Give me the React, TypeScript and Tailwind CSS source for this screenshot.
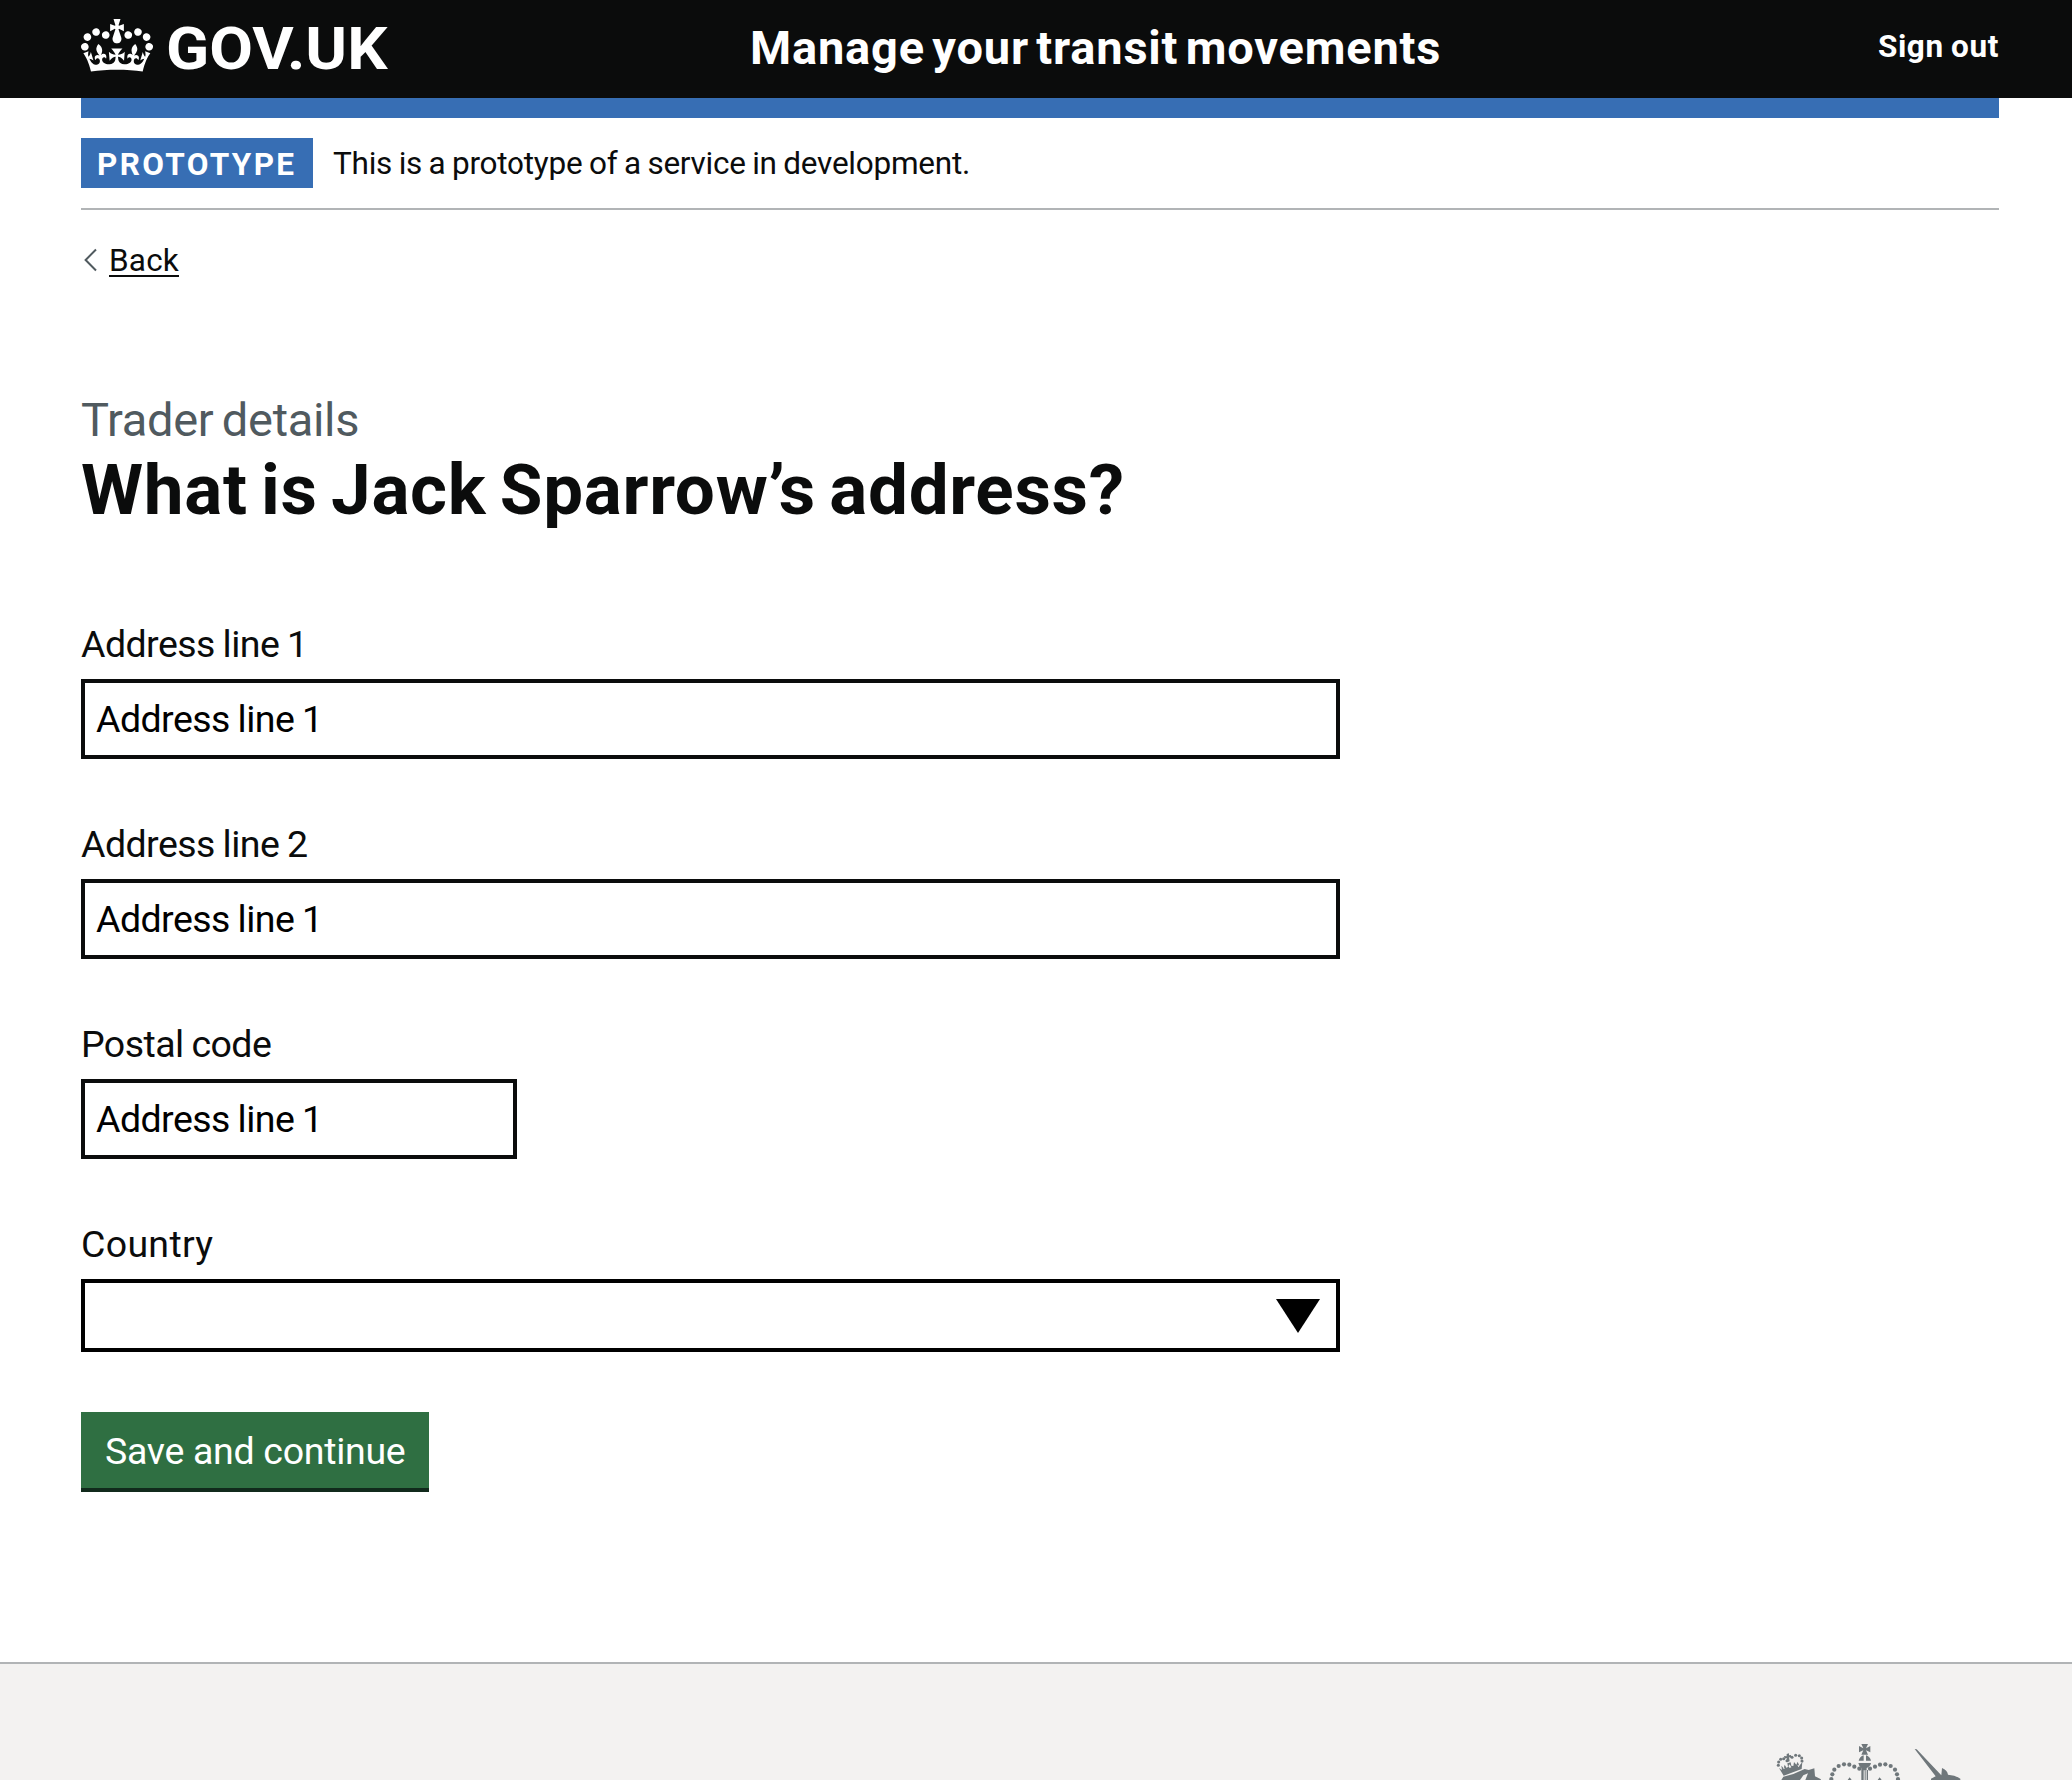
import type { ReactNode } from "react";

function Crown() {
  return (
    <svg className="h-[53px] w-[72px] shrink-0" viewBox="0 0 132 97" fill="#fff" aria-hidden="true">
      <path d="M25 30.2c3.5 1.5 7.7-.2 9.1-3.7 1.5-3.6-.2-7.8-3.9-9.2-3.6-1.4-7.6.3-9.1 3.9-1.4 3.5.3 7.5 3.9 9zM9 39.5c3.6 1.5 7.8-.2 9.2-3.7 1.5-3.6-.2-7.8-3.9-9.1-3.6-1.5-7.6.2-9.1 3.8-1.4 3.5.3 7.5 3.8 9zM4.4 57.2c3.5 1.5 7.7-.2 9.1-3.8 1.5-3.6-.2-7.7-3.9-9.1-3.5-1.5-7.6.3-9.1 3.8-1.4 3.5.3 7.6 3.9 9.1zm38.3-21.4c3.5 1.5 7.7-.2 9.1-3.8 1.5-3.6-.2-7.7-3.9-9.1-3.6-1.5-7.6.3-9.1 3.8-1.3 3.6.4 7.7 3.9 9.1zm64.4-5.6c-3.6 1.5-7.8-.2-9.1-3.7-1.5-3.6.2-7.8 3.8-9.2 3.6-1.4 7.7.3 9.2 3.9 1.3 3.5-.4 7.5-3.9 9zm15.9 9.3c-3.6 1.5-7.7-.2-9.1-3.7-1.5-3.6.2-7.8 3.7-9.1 3.6-1.5 7.7.2 9.2 3.8 1.5 3.5-.3 7.5-3.8 9zm4.7 17.7c-3.6 1.5-7.8-.2-9.2-3.8-1.5-3.6.2-7.7 3.9-9.1 3.6-1.5 7.7.3 9.2 3.8 1.3 3.5-.4 7.6-3.9 9.1zM89.3 35.8c-3.6 1.5-7.8-.2-9.2-3.8-1.4-3.6.2-7.7 3.9-9.1 3.6-1.5 7.7.3 9.2 3.8 1.4 3.6-.3 7.7-3.9 9.1zM69.7 17.7l8.9 4.7V9.3l-8.9 2.8c-.2-.3-.5-.6-.9-.9L72.4 0H59.6l3.5 11.2c-.3.3-.6.5-.9.9l-8.8-2.8v13.1l8.8-4.7c.3.3.6.7.9.9l-5 15.4v.1c-.2.8-.4 1.6-.4 2.4 0 4.1 3.1 7.5 7 8.1h.2c.3 0 .7.1 1 .1.4 0 .7 0 1-.1h.2c4-.6 7.1-4.1 7.1-8.1 0-.8-.1-1.7-.4-2.4V34l-5.1-15.4c.4-.2.7-.6 1-.9zM66 92.8c16.9 0 32.8 1.1 47.1 3.2 4-16.9 8.9-26.7 14-33.5l-9.6-3.4c1 4.9 1.1 7.2 0 10.2-1.5-1.4-3-4.3-4.2-8.7L108.6 76c2.8-2 5-3.2 7.5-3.3-4.4 9.4-10 11.9-13.6 11.2-4.3-.8-6.3-4.6-5.6-7.9 1-4.7 5.7-5.9 8-.5 4.3-8.7-3-11.4-7.6-8.8 7.1-7.2 7.9-13.5 2.1-21.1-8 6.1-8.1 12.3-4.5 20.8-4.7-5.4-12.1-2.5-9.5 6.2 3.4-5.2 7.9-2 7.2 3.1-.6 4.3-6.4 7.8-13.5 7.2-10.3-.9-10.9-8-11.2-13.8 2.5-.5 7.1 1.8 11 7.3L80.2 60c-4.1 4.4-8 5.3-12.3 5.4 1.4-4.4 8-11.6 8-11.6H55.5s6.4 7.2 7.9 11.6c-4.2-.1-8-1-12.3-5.4l1.4 16.4c3.9-5.5 8.5-7.7 10.9-7.3-.3 5.8-.9 12.8-11.1 13.8-7.2.6-12.9-2.9-13.5-7.2-.7-5 3.8-8.3 7.1-3.1 2.7-8.7-4.6-11.6-9.4-6.2 3.7-8.5 3.6-14.7-4.6-20.8-5.8 7.6-5 13.9 2.2 21.1-4.7-2.6-11.9.1-7.7 8.8 2.3-5.5 7.1-4.2 8.1.5.7 3.3-1.3 7.1-5.7 7.9-3.5.7-9-1.8-13.5-11.2 2.5.1 4.7 1.3 7.5 3.3l-4.7-15.4c-1.2 4.4-2.7 7.2-4.3 8.7-1.1-3-.9-5.3 0-10.2l-9.5 3.4c5 6.9 9.9 16.7 14 33.5 14.8-2.1 30.8-3.2 47.7-3.2z" />
    </svg>
  );
}

const archPearls = [
  [364, 362], [349, 356], [334, 350], [318, 349], [302, 354], [289, 365], [283, 379], [280, 393],
];
const lionPearls = [
  [121, 352], [122, 342], [128, 334], [137, 332], [147, 338], [162, 328], [173, 322], [184, 323], [191, 330], [192, 339],
];

function Crest() {
  return (
    <svg className="h-[42px] w-[261px] shrink-0" viewBox="0 270 783 126" fill="#6f777b" aria-hidden="true">
      {lionPearls.map(([x, y]) => <circle key={x} cx={x} cy={y} r="4.6" />)}
      <path d="M146 318l7-2 0 6 6-1 1 8-7-1 2 12-8 2-1-12-6 2-2-8 8 1z" />
      <path d="M123 360l9 6-2-13 7 7 3-10 6 10 4-4-2-10 10-3 2 10 6 1 2-12 7 8 4-9 5 12 9-11-2 21-54 20z" />
      <path d="M133 355l4 8 4-2zm18 0l4 5 5-2-5-9zm27-3l4 6 3-6z" fill="#f3f2f1" />
      <path d="M130 396l6-10 30-8 34-15 12 3 17-5 2 24 18 9-2 4z" />
      <path d="M186 396l10-14 14-6-8 20z" fill="#f3f2f1" />
      <path d="M370 288h20l-6 13 13-7v19l-13-6 6 13h-20l6-13-13 6v-19l13 7z" />
      <path d="M377 322v16h-15q3-12 15-16zM384 322v16h15q-3-12-15-16zM361 345h38q-2 11-13 15v36h-6v-29h-3v29h-7v-36q-7-4-9-15zM383 366v30h7v-30z" />
      {archPearls.map(([x, y]) => (
        <g key={x}>
          <circle cx={x} cy={y} r="6.3" />
          <circle cx={760 - x} cy={y} r="6.3" />
        </g>
      ))}
      <path d="M329 396l6-8 6 8zM419 396l6-8 6 8z" />
      <path d="M530 303l6 1 74 78 2-22q16 6 18 20 22 1 37 12v4h-88v-4l14-7z" />
    </svg>
  );
}

function Field({ label, spacing = "tracking-[-0.55px]", children }: { label: string; spacing?: string; children: ReactNode }) {
  return (
    <div className="flex flex-col gap-2.5">
      <label className={`h-[50px] text-[37.5px] leading-[50px] [word-spacing:-1px] ${spacing}`}>{label}</label>
      {children}
    </div>
  );
}

function TextBox({ width, value }: { width: string; value: string }) {
  return (
    <div className={`h-20 border-4 border-[#0b0c0c] pl-[11px] text-[37.5px] leading-[72px] tracking-[-0.55px] text-black [word-spacing:-1px] ${width}`}>
      {value}
    </div>
  );
}

export default function App() {
  return (
    <div className="flex h-[1782px] w-full flex-col overflow-hidden bg-white font-['Roboto',sans-serif] text-[#0b0c0c]">
      <header className="flex h-[98px] shrink-0 items-start bg-[#0b0c0c] pl-[81px] pr-[73px] text-white">
        <a className="flex w-[670px] shrink-0 items-start gap-[13px]">
          <span className="pt-[19px]"><Crown /></span>
          <span className="origin-left scale-x-[1.075] text-[59px] font-bold leading-[98px]">GOV.UK</span>
        </a>
        <span className="flex-1 whitespace-nowrap text-[47px] font-bold leading-[96px] tracking-[0.8px] [word-spacing:-5px]">Manage your transit movements</span>
        <a className="whitespace-nowrap text-[31.5px] font-bold leading-[94px] tracking-[0.6px] [word-spacing:-1px]">Sign out</a>
      </header>

      <div className="ml-[81px] mr-[73px] flex h-[1566px] shrink-0 flex-col">
        <div className="h-5 shrink-0 bg-[#376eb4]" />
        <div className="flex h-[92px] shrink-0 items-center border-b-2 border-[#b1b4b6]">
          <strong className="h-[50px] w-[232px] shrink-0 bg-[#376eb4] pl-4 text-[31.5px] font-bold leading-[53px] tracking-[2.35px] text-white">PROTOTYPE</strong>
          <span className="ml-5 h-[50px] text-[31.5px] leading-[52px] tracking-[-0.25px] [word-spacing:-1px]">This is a prototype of a service in development.</span>
        </div>

        <a className="mt-[33px] flex h-[34px] items-center">
          <svg className="ml-[2px] h-6 w-[14px]" viewBox="0 0 14 24" fill="none" stroke="#505a5f" strokeWidth="2">
            <path d="M13 1.5L2.6 12L13 22.5" />
          </svg>
          <span className="ml-3 h-[34px] border-b-2 border-[#0b0c0c] text-[31.5px] leading-[36px] tracking-[0.2px]">Back</span>
        </a>

        <div className="mt-[119px] text-[47px] leading-[48px] tracking-[-0.3px] text-[#505a5f] [word-spacing:-3px]">Trader details</div>
        <h1 className="mt-[11px] text-[71px] font-bold leading-[72px] tracking-[0.7px] [word-spacing:-5px]">What is Jack Sparrow’s address?</h1>

        <form className="mt-[93px] flex flex-col items-start gap-[60px]">
          <Field label="Address line 1"><TextBox width="w-[1260px]" value="Address line 1" /></Field>
          <Field label="Address line 2"><TextBox width="w-[1260px]" value="Address line 1" /></Field>
          <Field label="Postal code"><TextBox width="w-[436px]" value="Address line 1" /></Field>
          <Field label="Country" spacing="tracking-[0.3px]">
            <div className="flex h-[74px] w-[1260px] items-start justify-end border-4 border-black pr-4 pt-4">
              <svg className="h-[34px] w-11" viewBox="0 0 44 34" aria-hidden="true"><path d="M0 0H44L22 34z" /></svg>
            </div>
          </Field>
          <button type="button" className="h-20 w-[348px] border-b-4 border-[#112a1c] bg-[#2f6f42] pl-[24px] text-left text-[37.5px] leading-[78px] tracking-[-0.3px] text-white">Save and continue</button>
        </form>
      </div>

      <footer className="flex h-[118px] shrink-0 items-end justify-end overflow-hidden border-t-2 border-[#b1b4b6] bg-[#f3f2f1] pr-[73px]">
        <Crest />
      </footer>
    </div>
  );
}
